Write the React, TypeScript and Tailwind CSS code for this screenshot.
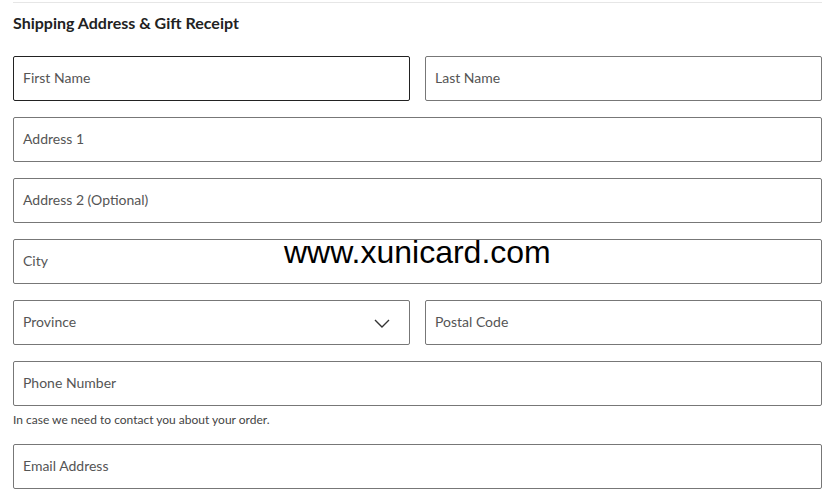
import React from 'react';

function Field({ label, focused }: { label: string; focused?: boolean }) {
  return (
    <div
      className={`flex h-[45px] items-center rounded-[2px] border px-[9px] pb-[3px] text-[14px] text-[#555] ${
        focused ? 'border-[#222]' : 'border-[#777]'
      }`}
    >
      {label}
    </div>
  );
}

export default function App() {
  return (
    <div className="relative h-[501px] w-[835px] bg-white font-['Lato',sans-serif]">
      <div className="mx-[13px] pt-[2px]">
        <div className="border-t border-[#e6e6e6]" />
        <h2 className="mt-[8px] text-[16px] font-bold text-[#222]">Shipping Address &amp; Gift Receipt</h2>

        <div className="mt-[21px] flex flex-col gap-[16px]">
          <div className="grid grid-cols-2 gap-[15px]">
            <Field label="First Name" focused />
            <Field label="Last Name" />
          </div>
          <Field label="Address 1" />
          <Field label="Address 2 (Optional)" />
          <Field label="City" />
          <div className="grid grid-cols-2 gap-[15px]">
            <div className="flex h-[45px] items-center justify-between rounded-[2px] border border-[#777] px-[9px] pb-[3px] text-[14px] text-[#555]">
              <span>Province</span>
              <svg className="mr-[10px] mt-[3px] h-[16px] w-[16px]" viewBox="0 0 16 16" fill="none" stroke="#333" strokeWidth="1.4">
                <path d="M1 5l7 7 7-7" />
              </svg>
            </div>
            <Field label="Postal Code" />
          </div>
          <div>
            <Field label="Phone Number" />
            <p className="mt-[5px] text-[12px] text-[#444]">In case we need to contact you about your order.</p>
          </div>
          <div className="-mt-[1px]">
            <Field label="Email Address" />
          </div>
        </div>
      </div>

      <div className="absolute left-[284px] top-[228px] font-['Liberation_Sans',sans-serif] text-[32px] text-black">
        www.xunicard.com
      </div>
    </div>
  );
}
